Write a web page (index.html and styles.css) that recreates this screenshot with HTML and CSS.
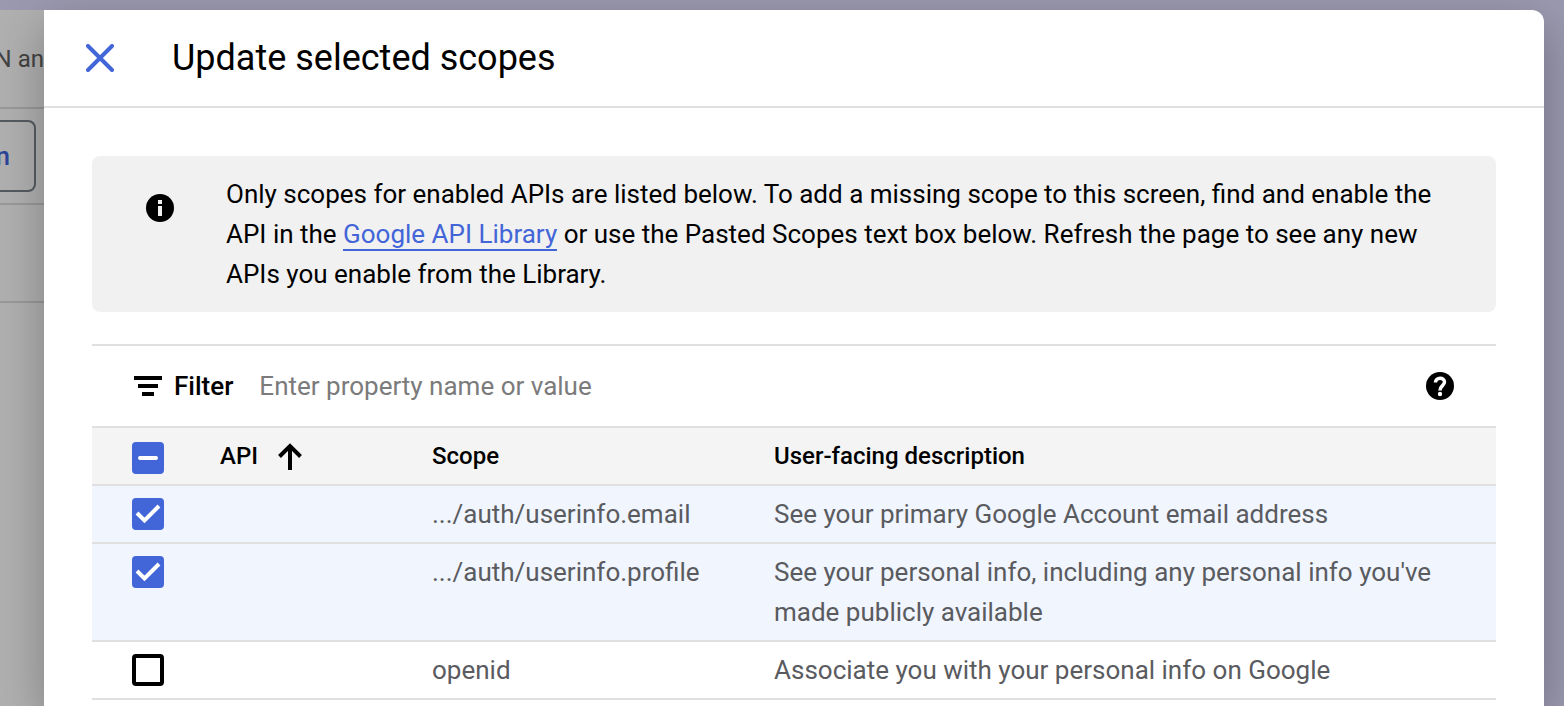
FILE: index.html
```html
<!DOCTYPE html>
<html lang="en">
<head>
<meta charset="utf-8">
<title>Update selected scopes</title>
<link rel="stylesheet" href="styles.css">
</head>
<body>
<div class="screen">
  <aside class="page">
    <div class="page-text">N an</div>
    <div class="page-actions"><button class="page-button" type="button">n</button></div>
    <div class="page-row"></div>
  </aside>
  <main class="panel" role="dialog" aria-labelledby="panel-title">
    <header class="panel-header">
      <button class="close" type="button" aria-label="Close">
        <svg width="28" height="28" viewBox="0 0 28 28"><path d="M2 2L26 26M26 2L2 26" fill="none" stroke="currentColor" stroke-width="4" stroke-linecap="round"/></svg>
      </button>
      <h1 class="title" id="panel-title">Update selected scopes</h1>
    </header>
    <div class="panel-body">
      <section class="notice">
        <svg class="notice-icon" width="28" height="28" viewBox="0 0 28 28"><circle cx="14" cy="14" r="14"/><path d="M12 6h4v4h-4zM12 12h4v10h-4z" fill="#f1f1f1"/></svg>
        <p class="notice-text">Only scopes for enabled APIs are listed below. To add a missing scope to this screen, find and enable the API in the <a class="link" href="#library">Google API Library</a> or use the Pasted Scopes text box below. Refresh the page to see any new APIs you enable from the Library.</p>
      </section>
      <section class="scopes">
        <div class="filter">
          <svg width="28" height="20" viewBox="0 0 28 20"><path d="M0 0h28v4H0zM4 8h20v4H4zM8 16h12v4H8z"/></svg>
          <label class="filter-label" for="filter">Filter</label>
          <input class="filter-input" id="filter" type="text" placeholder="Enter property name or value">
          <button class="help" type="button" aria-label="Help">
            <svg width="28" height="28" viewBox="0 0 28 28"><circle cx="14" cy="14" r="14"/><path d="M9.500 10.500C9.500 4.800 18.500 4.800 18.500 10.100C18.500 13.700 14 13.700 14 18.500" fill="none" stroke="#fff" stroke-width="3.500"/><circle cx="14" cy="22" r="2.200" fill="#fff"/></svg>
          </button>
        </div>
        <table class="table">
          <colgroup><col class="col-check"><col class="col-api"><col class="col-scope"><col></colgroup>
          <thead>
            <tr>
              <th class="check-cell"><span class="check-wrap"><input class="check mixed" type="checkbox" aria-label="Select all scopes"><svg class="mark" viewBox="0 0 32 32"><path d="M8 16H24" stroke-width="4" stroke-linecap="round"/></svg></span></th>
              <th><span class="sort">API <svg width="24" height="28" viewBox="0 0 24 28"><path d="M12 28V4M1.500 14.500L12 4L22.500 14.500" fill="none" stroke="#000" stroke-width="4"/></svg></span></th>
              <th>Scope</th>
              <th>User-facing description</th>
            </tr>
          </thead>
          <tbody>
            <tr class="selected">
              <td class="check-cell"><span class="check-wrap"><input class="check" type="checkbox" checked aria-label="userinfo.email"><svg class="mark" viewBox="0 0 32 32"><path d="M5 15L12.500 22.500L27 8" stroke-width="4"/></svg></span></td>
              <td></td>
              <td>.../auth/userinfo.email</td>
              <td>See your primary Google Account email address</td>
            </tr>
            <tr class="selected">
              <td class="check-cell"><span class="check-wrap"><input class="check" type="checkbox" checked aria-label="userinfo.profile"><svg class="mark" viewBox="0 0 32 32"><path d="M5 15L12.500 22.500L27 8" stroke-width="4"/></svg></span></td>
              <td></td>
              <td>.../auth/userinfo.profile</td>
              <td>See your personal info, including any personal info you've made publicly available</td>
            </tr>
            <tr>
              <td class="check-cell"><span class="check-wrap"><input class="check" type="checkbox" aria-label="openid"></span></td>
              <td></td>
              <td>openid</td>
              <td>Associate you with your personal info on Google</td>
            </tr>
          </tbody>
        </table>
      </section>
    </div>
  </main>
</div>
</body>
</html>
```
FILE: styles.css
```css
* { box-sizing: border-box; }
body {
  margin: 0;
  background: #9b99af;
  color: #000;
  font-family: Roboto, "Liberation Sans", sans-serif;
  font-size: 26px;
  line-height: 40px;
}
button { font: inherit; background: none; border: 0; padding: 0; cursor: pointer; }
svg { display: block; flex: none; }
.screen { display: flex; height: 100vh; overflow: hidden; padding: 10px 20px 0 0; }

.page { width: 44px; flex: none; overflow: hidden; background: #b0b0b0; }
.page-text {
  display: flex;
  justify-content: flex-end;
  align-items: center;
  height: 99px;
  border-bottom: 2px solid #999;
  color: #424242;
  font-size: 24px;
  white-space: nowrap;
}
.page-actions { padding: 11px 8px 11px 0; border-bottom: 2px solid #999; }
.page-button {
  display: block;
  width: 100%;
  height: 72px;
  border: 2px solid #555b61;
  border-left: 0;
  border-radius: 0 8px 8px 0;
  padding-right: 24px;
  color: #2c4499;
  font-weight: 500;
  direction: rtl;
}
.page-row { height: 98px; border-bottom: 2px solid #999; }

.panel {
  position: relative;
  flex: 1;
  min-width: 0;
  background: #fff;
  border-radius: 0 12px 0 0;
  box-shadow: 0 16px 48px rgba(0, 0, 0, 0.28);
}
.panel-header {
  display: flex;
  align-items: center;
  gap: 58px;
  padding: 24px 42px;
  border-bottom: 2px solid #e0e0e0;
}
.close { color: #4265d8; }
.title { margin: 0; font-size: 36px; line-height: 48px; font-weight: 400; }
.panel-body { padding: 48px; }

.notice {
  display: flex;
  gap: 52px;
  padding: 18px 54px;
  border-radius: 8px;
  background: #f1f1f1;
}
.notice-icon { margin-top: 20px; }
.notice-text { margin: 0; }
.link { color: #4265d8; text-decoration: none; border-bottom: 2px solid #4265d8; }

.scopes { margin-top: 32px; border-top: 2px solid #e0e0e0; }
.filter { display: flex; align-items: center; padding: 20px 42px; }
.filter-label { margin: 0 26px 0 12px; font-weight: 500; }
.filter-input {
  flex: 1;
  min-width: 0;
  height: 40px;
  border: 0;
  padding: 0;
  outline: 0;
  background: transparent;
  font: inherit;
}
.filter-input::placeholder { color: #7b7b7b; opacity: 1; }

.table { width: 100%; table-layout: fixed; border-collapse: separate; border-spacing: 0; border-top: 2px solid #e0e0e0; }
.col-check { width: 128px; }
.col-api { width: 212px; }
.col-scope { width: 342px; }
.table th, .table td { padding: 8px 0; border-bottom: 2px solid #e0e0e0; text-align: left; vertical-align: top; }
.table th { background: #f4f4f4; font-size: 24px; font-weight: 500; }
.table td { color: #5a5b5f; }
.table td:last-child { padding-right: 40px; }
.selected td { background: #f0f5fe; }
.sort { display: flex; align-items: center; gap: 20px; }
.table .check-cell { padding: 12px 0 12px 40px; }
.table th.check-cell { padding: 14px 0 10px 40px; }
.check-wrap { display: block; position: relative; width: 32px; height: 32px; }
.check {
  appearance: none;
  display: block;
  width: 32px;
  height: 32px;
  margin: 0;
  border: 4px solid #000;
  border-radius: 4px;
  background: #fff;
}
.check:checked, .check.mixed { border-color: #4265d8; background: #4265d8; }
.mark { position: absolute; inset: 0; fill: none; stroke: #fff; pointer-events: none; }
```
